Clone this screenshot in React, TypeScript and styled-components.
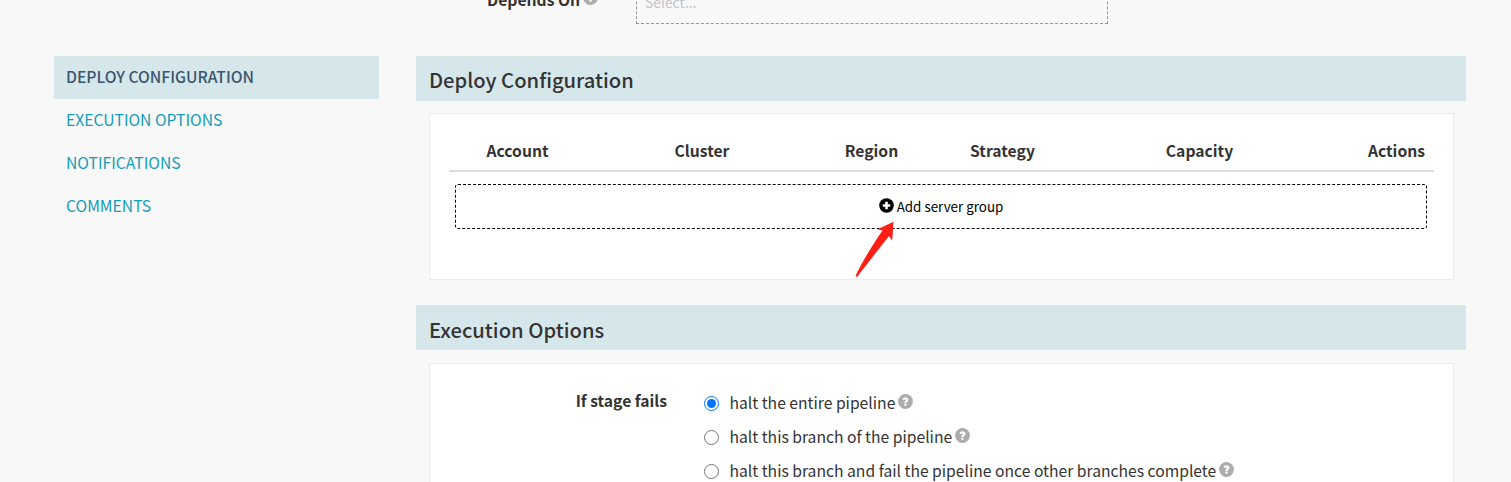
import React from "react";
import styled, { createGlobalStyle } from "styled-components";

const Global = createGlobalStyle`
  * { box-sizing: border-box; }
  body {
    margin: 0;
    background: #f8f8f8;
    color: #333;
    font-family: "Noto Sans CJK SC", "Open Sans", sans-serif;
    font-size: 15.68px;
    overflow: hidden;
  }
`;

const Page = styled.div`
  width: 1511px;
  height: 482px;
  overflow: hidden;
  background: #f8f8f8;
`;

const DependsRow = styled.div`
  display: flex;
  align-items: flex-end;
  height: 24px;
  padding-left: 487px;
`;

const DependsLabel = styled.div`
  display: flex;
  align-items: center;
  gap: 3px;
  width: 149px;
  height: 24px;
  margin-bottom: 13px;
  font-weight: 700;
  white-space: nowrap;
`;

const SelectBox = styled.div`
  width: 472px;
  height: 42px;
  padding: 8px 8px;
  border: 1px dashed #999;
  color: #c4c4c4;
  font-size: 13.9px;
  line-height: 22px;
`;

const Columns = styled.div`
  display: flex;
  align-items: flex-start;
  gap: 37px;
  padding: 32px 45px 0 54px;
`;

const Nav = styled.nav`
  display: flex;
  flex-direction: column;
  width: 325px;
`;

const NavItem = styled.a<{ $active?: boolean }>`
  height: 43px;
  padding-left: 12px;
  line-height: 41px;
  text-transform: uppercase;
  white-space: nowrap;
  color: ${(p) => (p.$active ? "#3b556d" : "#139cb8")};
  font-weight: ${(p) => (p.$active ? 500 : 400)};
  background: ${(p) => (p.$active ? "#d6e7eb" : "transparent")};
`;

const Main = styled.main`
  flex: 1;
`;

const Section = styled.section`
  margin-bottom: 25px;
`;

const SectionTitle = styled.h4<{ $line?: number }>`
  margin: 0;
  height: 45px;
  padding-left: 13px;
  background: #d6e7eb;
  font-size: 20.2px;
  font-weight: 500;
  line-height: ${(p) => p.$line ?? 48}px;
`;

const Panel = styled.div<{ $gap: number; $height: number }>`
  height: ${(p) => p.$height}px;
  margin: ${(p) => p.$gap}px 12px 0 13px;
  border: 1px solid #ebebeb;
  background: #fff;
`;

const TableHead = styled.div`
  display: grid;
  grid-template-columns: 137px 232px 107px 155px 239px 1fr;
  height: 58px;
  margin: 0 19px;
  border-bottom: 2px solid #ddd;
`;

const HeadCell = styled.div<{ $end?: boolean }>`
  padding: ${(p) => (p.$end ? "25px 9px 0 0" : "25px 0 0")};
  text-align: ${(p) => (p.$end ? "right" : "center")};
  font-weight: 700;
  line-height: 24px;
`;

const AddButton = styled.button`
  position: relative;
  display: flex;
  align-items: center;
  justify-content: center;
  gap: 3px;
  width: 972px;
  height: 45px;
  margin: 12px 0 0 25px;
  padding: 0 0 1px;
  border: 1px dashed #000;
  border-radius: 3px;
  background: transparent;
  color: #000;
  font-family: inherit;
  font-size: 13.4px;
`;

const Pointer = styled.svg`
  position: absolute;
  left: 395px;
  top: 35px;
`;

const OptionsForm = styled.div`
  display: flex;
  padding-top: 22px;
`;

const FormLabel = styled.div`
  width: 237px;
  margin-right: 37px;
  padding-top: 3px;
  text-align: right;
  font-weight: 700;
  line-height: 24px;
`;

const RadioList = styled.div`
  display: flex;
  flex-direction: column;
`;

const RadioRow = styled.label`
  display: flex;
  align-items: center;
  height: 34px;
  white-space: nowrap;
`;

const Radio = styled.input`
  width: 15px;
  height: 15px;
  margin: 1px 10.5px 0 0;
`;

const RadioText = styled.span`
  line-height: 24px;
  margin-right: 3px;
`;

const IconSvg = styled.svg<{ $lift?: number }>`
  display: block;
  flex: none;
  margin-bottom: ${(p) => p.$lift ?? 0}px;
`;

const HelpIcon = () => (
  <IconSvg $lift={3} width="15" height="15" viewBox="0 0 15 15">
    <circle cx="7.5" cy="7.5" r="7.4" fill="#acacac" />
    <path d="M4.5 5.8C4.6 4.2 5.8 3.3 7.5 3.3s3 .9 3 2.5c0 1.7-1.9 1.8-1.9 3.1H6.3c0-1.9 1.8-2 1.8-2.9 0-.9-1.4-.9-1.4.1z" fill="#fff" />
    <rect x="6.3" y="9.7" width="2.3" height="2" fill="#fff" />
  </IconSvg>
);

const PlusIcon = () => (
  <IconSvg $lift={1} width="15" height="15" viewBox="0 0 15 15">
    <circle cx="7.5" cy="7.5" r="7.3" fill="#000" />
    <path d="M6.2 3.8h2.6v2.4h2.4v2.6H8.8v2.4H6.2V8.8H3.8V6.2h2.4z" fill="#fff" />
  </IconSvg>
);

const navItems = ["Deploy Configuration", "Execution Options", "Notifications", "Comments"];
const headings = ["Account", "Cluster", "Region", "Strategy", "Capacity", "Actions"];
const failureOptions = [
  "halt the entire pipeline",
  "halt this branch of the pipeline",
  "halt this branch and fail the pipeline once other branches complete",
];

export default function App() {
  return (
    <>
      <Global />
      <Page>
        <DependsRow>
          <DependsLabel>
            Depends On
            <HelpIcon />
          </DependsLabel>
          <SelectBox>Select...</SelectBox>
        </DependsRow>
        <Columns>
          <Nav>
            {navItems.map((item, i) => (
              <NavItem key={item} $active={i === 0}>{item}</NavItem>
            ))}
          </Nav>
          <Main>
            <Section>
              <SectionTitle>Deploy Configuration</SectionTitle>
              <Panel $gap={12} $height={167}>
                <TableHead>
                  {headings.map((h) => (
                    <HeadCell key={h} $end={h === "Actions"}>{h}</HeadCell>
                  ))}
                </TableHead>
                <AddButton>
                  <PlusIcon />
                  Add server group
                  <Pointer width="46" height="60" viewBox="0 0 46 60">
                    <path d="M42.500 1.700L26.500 9.200l5 1.200C22 24 12.500 39.500 4.700 55.500c.2 1.200 1 1.500 1.700.9L38 16l3.200 4.800z" fill="#ff1f14" />
                  </Pointer>
                </AddButton>
              </Panel>
            </Section>
            <Section>
              <SectionTitle $line={50}>Execution Options</SectionTitle>
              <Panel $gap={13} $height={200}>
                <OptionsForm>
                  <FormLabel>If stage fails</FormLabel>
                  <RadioList>
                    {failureOptions.map((option, i) => (
                      <RadioRow key={option}>
                        <Radio type="radio" name="failure" defaultChecked={i === 0} />
                        <RadioText>{option}</RadioText>
                        <HelpIcon />
                      </RadioRow>
                    ))}
                  </RadioList>
                </OptionsForm>
              </Panel>
            </Section>
          </Main>
        </Columns>
      </Page>
    </>
  );
}
